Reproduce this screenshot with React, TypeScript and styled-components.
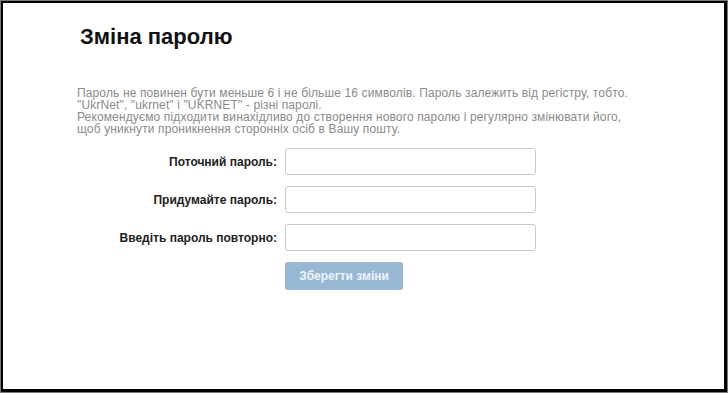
import React from 'react';
import styled, { createGlobalStyle } from 'styled-components';

const GlobalStyle = createGlobalStyle`
  html, body {
    margin: 0;
    padding: 0;
    background: #fff;
    font-family: "Liberation Sans", Arial, sans-serif;
  }
`;

const Frame = styled.div`
  box-sizing: border-box;
  width: 728px;
  height: 393px;
  border-style: solid;
  border-color: #000;
  border-width: 3px 4px 4px 3px;
  outline: 1px solid #7a7a7a;
  outline-offset: -1px;
  background: #fff;
`;

const Content = styled.div`
  padding: 20px 0 0 74px;
`;

const Title = styled.h1`
  margin: 0 0 0 3px;
  font-size: 22px;
  font-weight: bold;
  color: #111;
  line-height: 28px;
`;

const Note = styled.p`
  margin: 36px 0 0 0;
  width: 562px;
  font-size: 12px;
  line-height: 12px;
  letter-spacing: 0.13px;
  color: #8a8a8a;
`;

const Form = styled.form`
  margin-top: 13px;
  display: grid;
  grid-template-columns: 200px 251px;
  column-gap: 8px;
  row-gap: 11px;
  align-items: center;
`;

const Label = styled.label`
  text-align: right;
  font-size: 12px;
  font-weight: bold;
  color: #222;
`;

const Input = styled.input`
  box-sizing: border-box;
  width: 251px;
  height: 27px;
  border: 1px solid #c9c9c9;
  border-radius: 3px;
  background: #fff;
  outline: none;
`;

const Button = styled.button`
  grid-column: 2;
  justify-self: start;
  box-sizing: border-box;
  width: 118px;
  height: 28px;
  border: none;
  border-radius: 3px;
  background: #97b7d4;
  color: #eef3f8;
  font-family: "Liberation Sans", Arial, sans-serif;
  font-size: 12px;
  font-weight: bold;
  cursor: default;
`;

const fields = ['Поточний пароль:', 'Придумайте пароль:', 'Введіть пароль повторно:'];

const App: React.FC = () => {
  return (
    <>
      <GlobalStyle />
      <Frame>
        <Content>
          <Title>Зміна паролю</Title>
          <Note>
            Пароль не повинен бути меньше 6 і не більше 16 символів. Пароль залежить від регістру, тобто.
            "UkrNet", "ukrnet" і "UKRNET" - різні паролі.
            <br />
            Рекомендуємо підходити винахідливо до створення нового паролю і регулярно змінювати його,
            щоб уникнути проникнення сторонніх осіб в Вашу пошту.
          </Note>
          <Form onSubmit={(e) => e.preventDefault()}>
            {fields.map((f) => (
              <React.Fragment key={f}>
                <Label>{f}</Label>
                <Input type="password" />
              </React.Fragment>
            ))}
            <Button type="submit">Зберегти зміни</Button>
          </Form>
        </Content>
      </Frame>
    </>
  );
};

export default App;
